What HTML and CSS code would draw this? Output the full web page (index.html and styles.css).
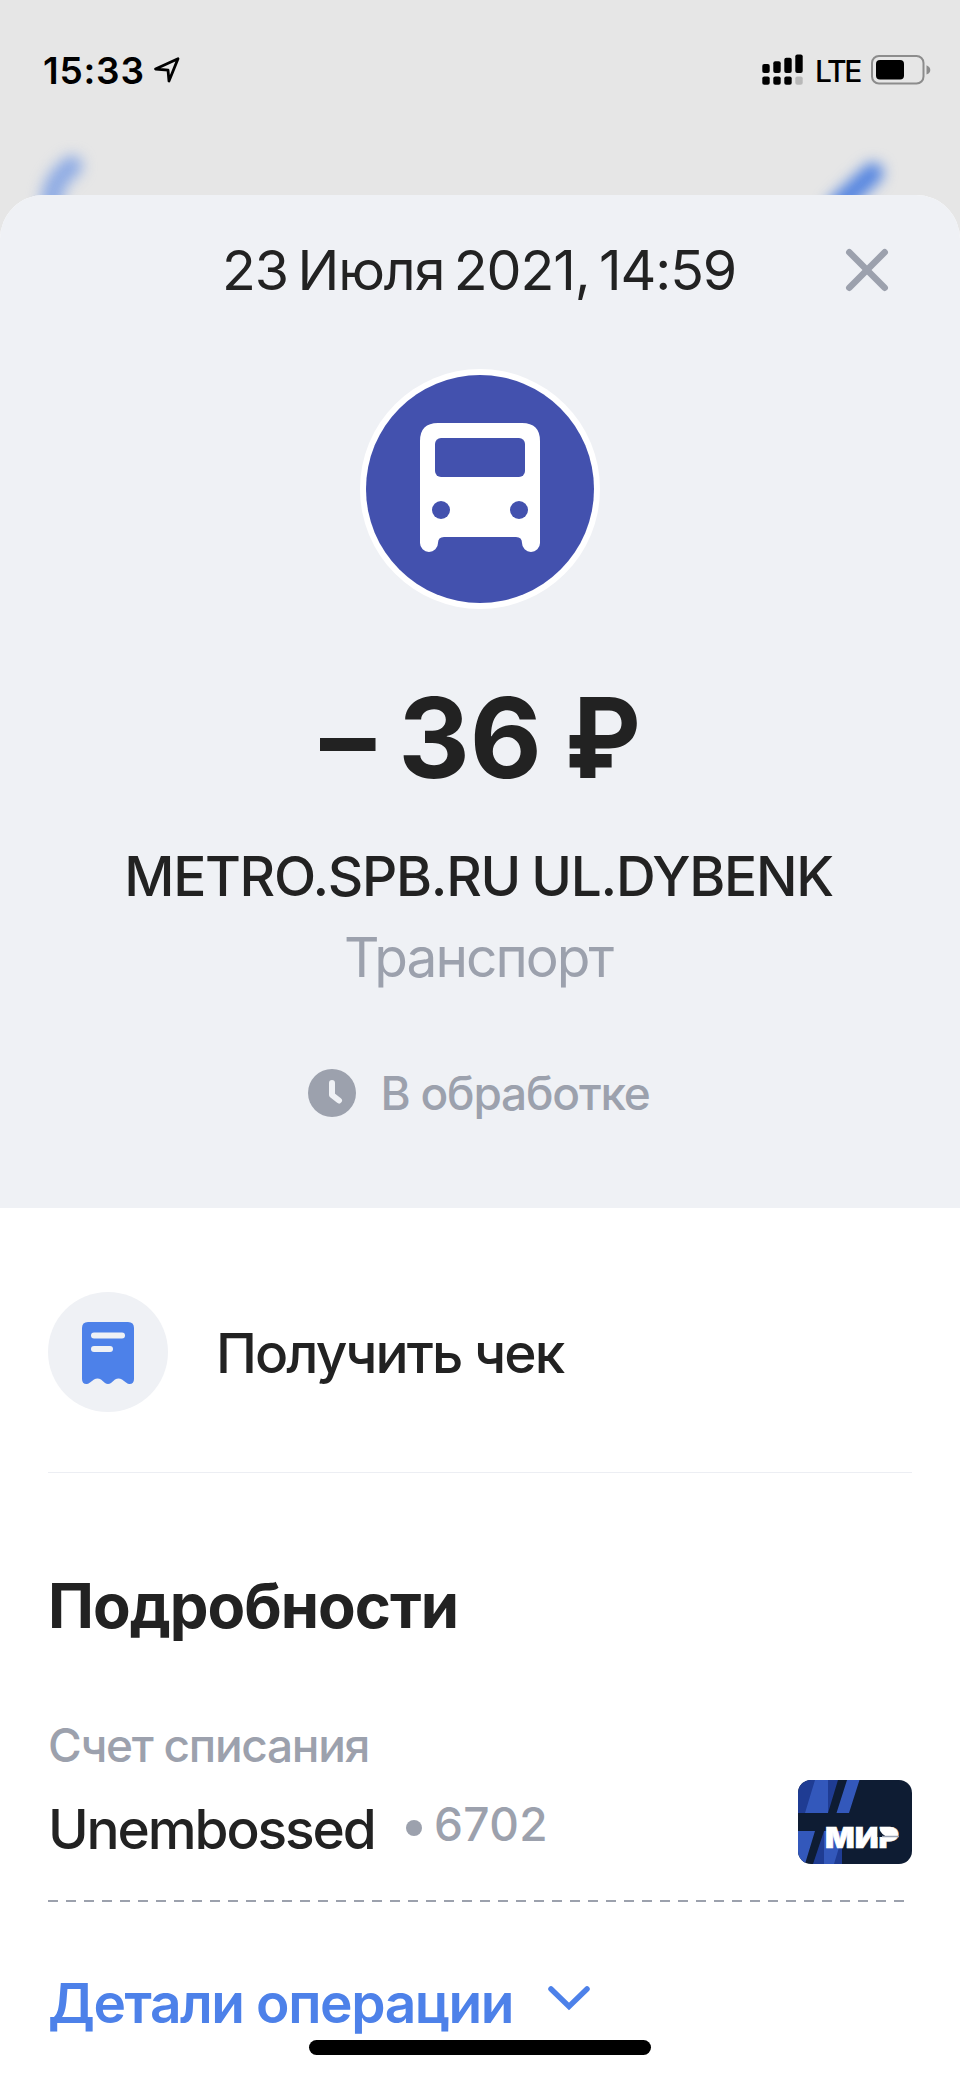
FILE: index.html
```html
<!DOCTYPE html>
<html lang="ru">

<head>
    <meta charset="UTF-8">
    <title>Операция</title>
    <link rel="stylesheet" href="styles.css">
</head>

<body>
    <div class="status">
        <span class="time">15:33</span>
        <svg class="geo" width="28" height="28" viewBox="0 0 28 28">
            <path d="M2.5 13 L25 2.8 L16 25 L15 14.2 Z" fill="none" stroke="#000" stroke-width="2.8" stroke-linejoin="round"/>
        </svg>
        <svg class="signal" width="42" height="32" viewBox="0 0 42 32">
            <rect x="0.3" y="10" width="7.4" height="9" rx="2"/>
            <rect x="11.3" y="7.3" width="7.4" height="11.7" rx="2"/>
            <rect x="22.3" y="3.7" width="7.4" height="15.3" rx="2"/>
            <rect x="33.3" y="0.4" width="7.4" height="18.6" rx="2"/>
            <rect x="0.3" y="22.5" width="7.4" height="8.3" rx="2"/>
            <rect x="11.3" y="22.5" width="7.4" height="8.3" rx="2"/>
            <rect x="22.3" y="22.5" width="7.4" height="8.3" rx="2"/>
            <rect x="33.3" y="22.5" width="7.4" height="8.3" rx="2" fill="#b8b8b8"/>
        </svg>
        <span class="lte">LTE</span>
        <svg class="battery" width="60" height="30" viewBox="0 0 60 30">
            <rect x="1" y="1" width="51.5" height="27.5" rx="7" fill="none" stroke="#8c8c8c" stroke-width="2"/>
            <rect x="5" y="5" width="28" height="19.5" rx="4"/>
            <path d="M55.5 10.3 Q59.3 12 59.3 15 Q59.3 18 55.5 19.5 Z" fill="#8c8c8c"/>
        </svg>
    </div>
    <!-- размытые иконки экрана под шторкой -->
    <svg class="under" width="960" height="120" viewBox="0 120 960 120">
        <path d="M72 166 Q50 182 51 208" fill="none" stroke="#8eabe4" stroke-width="21" stroke-linecap="round"/>
        <path d="M873 173 L836 207" fill="none" stroke="#5585e0" stroke-width="21" stroke-linecap="round"/>
    </svg>

    <div class="sheet">
        <div class="top">
            <div class="head">
                <span class="date">23 Июля 2021, 14:59</span>
                <svg class="close" width="44" height="44" viewBox="0 0 44 44">
                    <path d="M4.300 4.300 L39.700 39.700 M39.700 4.300 L4.300 39.700" stroke="#9ca1ad" stroke-width="6.500" stroke-linecap="round"/>
                </svg>
            </div>
            <svg class="bus" width="240" height="240" viewBox="0 0 240 240">
                <circle cx="120" cy="120" r="120" fill="#fff"/>
                <circle cx="120" cy="120" r="114" fill="#4351ae"/>
                <path fill="#fff" d="M60 72 Q60 54 78 54 H162 Q180 54 180 72 V174 a9 9 0 0 1 -18 0 Q162 168 156 168 H84 Q78 168 78 174 a9 9 0 0 1 -18 0 Z"/>
                <rect x="75" y="69" width="90" height="39" rx="6" fill="#4351ae"/>
                <circle cx="81" cy="141" r="9" fill="#4351ae"/>
                <circle cx="159" cy="141" r="9" fill="#4351ae"/>
            </svg>
            <div class="sum">– 36 <span class="rub">₽</span></div>
            <div class="shop">METRO.SPB.RU UL.DYBENK</div>
            <div class="cat">Транспорт</div>
            <div class="state">
                <svg width="48" height="48" viewBox="0 0 48 48">
                    <circle cx="24" cy="24" r="24" fill="#9ca1ad"/>
                    <path d="M24 14 V26 L31 31.500" fill="none" stroke="#eff1f5" stroke-width="6" stroke-linecap="round" stroke-linejoin="round"/>
                </svg>
                <span class="state-text">В обработке</span>
            </div>
        </div>

        <div class="check">
            <div class="check-pic">
                <svg width="52" height="62" viewBox="0 0 52 62">
                    <path fill="#4d81e9" d="M6 0 H46 Q52 0 52 6 V57 Q52 62 47.500 62 Q46 62 44 60.500 L40 57.500 Q36.500 55.500 33 57.500 L29 61 Q26 63 23 61 L19 57.500 Q15.500 55.500 12 57.500 L8 60.500 Q6 62 4.500 62 Q0 62 0 57 V6 Q0 0 6 0 Z"/>
                    <rect x="9" y="10.500" width="34" height="6" rx="3" fill="#eff1f5"/>
                    <rect x="9" y="24" width="22" height="6" rx="3" fill="#eff1f5"/>
                </svg>
            </div>
            <span class="check-text">Получить чек</span>
        </div>

        <div class="info">
            <h2>Подробности</h2>
            <div class="account">
                <div>
                    <div class="label">Счет списания</div>
                    <div class="row">
                        <span class="name">Unembossed</span>
                        <i class="dot"></i>
                        <span class="num">6702</span>
                    </div>
                </div>
                <svg class="card" width="114" height="84" viewBox="0 0 114 84">
                    <rect width="114" height="84" fill="#0e1c33"/>
                    <path fill="#1f3c93" d="M0 0 H40 L30 33 H0 Z M26 51 H44 V84 H15 Z"/>
                    <path fill="#3358bb" d="M17 0 H30 V33 H7 Z M49 0 H61.500 L51 33 H38.500 Z M0 51 H17 L7 84 H0 Z M26 51 H46 L36 84 H26 Z"/>
                    <text class="mir" x="27" y="68" textLength="74" lengthAdjust="spacingAndGlyphs">МИР</text>
                    <rect x="86" y="50" width="10" height="9" fill="#fff"/>
                    <path fill="#0e1c33" d="M79.500 47 L79.500 57 H90 Q83 55 80.500 47 Z"/>
                    <path d="M84 56.600 H101" stroke="#9aa3b5" stroke-width="1.500"/>
                </svg>
            </div>
            <svg class="dash" width="864" height="2" viewBox="0 0 864 2">
                <path d="M0 1 H860" stroke="#9ca1ad" stroke-width="2" stroke-dasharray="10 8"/>
            </svg>
            <div class="more">
                <span class="more-text">Детали операции</span>
                <svg width="44" height="28" viewBox="0 0 44 28">
                    <path d="M4 5 L22 22.500 L40 5" fill="none" stroke="#4d81e9" stroke-width="5.500" stroke-linecap="round"/>
                </svg>
            </div>
        </div>
    </div>
    <div class="home"></div>
</body>

</html>
```
FILE: styles.css
```css
* {
    margin: 0;
    padding: 0;
    box-sizing: border-box;
}

body {
    width: 960px;
    height: 2079px;
    position: relative;
    overflow: hidden;
    background-color: #e6e6e6;
    font-family: Inter, "Liberation Sans", sans-serif;
    color: #222;
    white-space: nowrap;
}

svg {
    display: block;
    flex: none;
}

.status {
    display: flex;
    align-items: center;
    height: 140px;
    padding-left: 43px;
    padding-right: 29px;
    color: #000;
}

.time {
    width: 110px;
    font-size: 37px;
    font-weight: 600;
    letter-spacing: 0.8px;
}

.signal {
    margin-left: auto;
}

.lte {
    width: 56px;
    margin-left: 11px;
    padding-top: 2px;
    font-size: 30px;
    font-weight: 500;
    letter-spacing: -2.2px;
}

.under {
    position: absolute;
    left: 0;
    top: 120px;
    filter: blur(7px);
}

.sheet {
    position: relative;
    height: 1884px;
    margin-top: 55px;
    background-color: #fff;
    border-radius: 44px 44px 0 0;
    overflow: hidden;
}

.top {
    height: 1013px;
    background-color: #eff1f5;
    display: flex;
    flex-direction: column;
    align-items: center;
}

.head {
    width: 100%;
    height: 174px;
    padding-left: 222px;
    padding-right: 71px;
    display: flex;
    justify-content: space-between;
    line-height: 70px;
    padding-top: 40px;
}

.date {
    font-size: 55.5px;
    letter-spacing: -1.1px;
    word-spacing: -5px;
}

.close {
    margin-top: 13px;
}

.sum {
    margin-top: 69px;
    line-height: 120px;
    font-size: 111px;
    font-weight: 700;
    word-spacing: -3.5px;
    /* тире на уровне строчных букв */
    font-feature-settings: "calt" 0;
}

.rub {
    display: inline-block;
    margin-right: -7px;
    transform: scaleX(0.92);
    transform-origin: left;
}

.shop {
    margin-top: 38px;
    margin-right: 3px;
    line-height: 80px;
    font-size: 55px;
    font-weight: 500;
    letter-spacing: -1.3px;
    word-spacing: -2px;
}

.cat {
    margin-right: 4px;
    line-height: 82px;
    font-size: 55px;
    letter-spacing: -2px;
    color: #9ca1ad;
}

.state {
    display: flex;
    align-items: center;
    gap: 24px;
    height: 60px;
    margin-top: 65px;
    margin-right: 2px;
    font-size: 46px;
    font-weight: 500;
    letter-spacing: -1.2px;
    color: #9ca1ad;
}

.check {
    display: flex;
    align-items: center;
    gap: 48px;
    height: 265px;
    margin: 0 48px;
    padding-top: 24px;
    border-bottom: 1px solid #eceef3;
    font-size: 55px;
    font-weight: 500;
    letter-spacing: -1.9px;
}

.check-text {
    padding-top: 2px;
}

.check-pic {
    width: 120px;
    height: 120px;
    padding-top: 2px;
    border-radius: 50%;
    background-color: #eff1f5;
    display: flex;
    align-items: center;
    justify-content: center;
}

.info {
    padding: 93px 48px 0;
}

h2 {
    line-height: 80px;
    font-size: 61.5px;
    font-weight: 700;
    letter-spacing: -1px;
}

.account {
    display: flex;
    justify-content: space-between;
    height: 254px;
    padding-top: 69px;
}

.label {
    line-height: 60px;
    font-size: 46px;
    font-weight: 500;
    letter-spacing: -1.3px;
    color: #9ca1ad;
}

.row {
    display: flex;
    line-height: 80px;
    margin-top: 14px;
}

.name {
    width: 358px;
    font-size: 55px;
    font-weight: 500;
    letter-spacing: -2.1px;
}

.dot {
    width: 16px;
    height: 16px;
    margin-top: 31px;
    margin-right: 12px;
    border-radius: 50%;
    background-color: #9ca1ad;
}

.num {
    font-size: 46px;
    font-weight: 500;
    letter-spacing: 0.3px;
    line-height: 71px;
    color: #9ca1ad;
}

.card {
    margin-top: 65px;
    border-radius: 13px;
}

.mir {
    font-family: Inter, sans-serif;
    font-size: 28px;
    font-weight: 900;
    fill: #fff;
    stroke: #fff;
    stroke-width: 0.6px;
}

.more {
    display: flex;
    height: 80px;
    margin-top: 61px;
    line-height: 80px;
    font-size: 55px;
    font-weight: 600;
    letter-spacing: -1.4px;
    color: #4d81e9;
}

.more svg {
    margin-left: 34px;
    margin-top: 21px;
}

.home {
    position: absolute;
    left: 309px;
    top: 2040px;
    width: 342px;
    height: 15px;
    border-radius: 8px;
    background-color: #000;
}
```
